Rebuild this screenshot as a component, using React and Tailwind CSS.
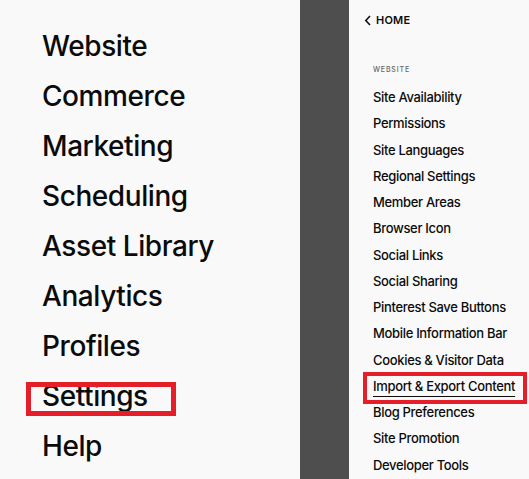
import React from "react";

const left = ["Website","Commerce","Marketing","Scheduling","Asset Library","Analytics","Profiles","Settings","Help"];
const right = ["Site Availability","Permissions","Site Languages","Regional Settings","Member Areas","Browser Icon","Social Links","Social Sharing","Pinterest Save Buttons","Mobile Information Bar","Cookies & Visitor Data","Import & Export Content","Blog Preferences","Site Promotion","Developer Tools"];

export default function App() {
  return (
    <div className="flex w-[529px] h-[479px] overflow-hidden bg-[#f9f9f9] text-[#0b0b0b]" style={{ fontFamily: "Inter, 'Liberation Sans', sans-serif" }}>
      <div className="w-[300px] shrink-0 pt-[21px] pl-[42px]">
        {left.map((t) => (
          <div key={t} className="relative h-[50px] leading-[50px] text-[28px] font-medium tracking-[-0.015em]">
            {t}
            {t === "Settings" && (
              <div className="absolute left-[-16px] top-[11px] w-[150px] h-[34px] border-[5px] border-[#e41f2a]"></div>
            )}
          </div>
        ))}
      </div>
      <div className="w-[49px] shrink-0 bg-[#4e4e4e]"></div>
      <div className="flex-1 pt-[12px]">
        <div className="flex items-center h-[16px] pl-[15px] gap-[4px]">
          <svg width="8" height="11" viewBox="0 0 8 11" fill="none">
            <path d="M6 1L1.8 5.5L6 10" stroke="#111" strokeWidth="1.6" />
          </svg>
          <span className="text-[11px] font-semibold leading-[16px] tracking-[0.02em]">HOME</span>
        </div>
        <div className="mt-[37px] pl-[24px] text-[7px] leading-[10px] tracking-[0.12em] text-[#666] font-medium">WEBSITE</div>
        <div className="mt-[9px] pl-[24px]">
          {right.map((t) => (
            <div key={t} className="relative h-[26.25px] leading-[26.25px] text-[13px] font-medium tracking-[-0.025em] whitespace-nowrap">
              {t === "Import & Export Content" ? (
                <>
                  <span className="underline underline-offset-[5px] decoration-[1px]">{t}</span>
                  <div className="absolute left-[-10px] top-[-1px] w-[164px] h-[32px] border-[4px] border-[#e41f2a]"></div>
                </>
              ) : t}
            </div>
          ))}
        </div>
      </div>
    </div>
  );
}
